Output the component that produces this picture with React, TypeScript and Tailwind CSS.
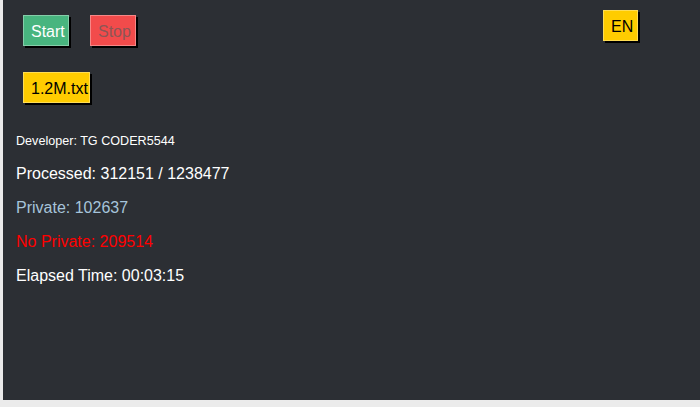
import React from 'react';

const btn =
  'h-[31px] px-[7px] pt-[2px] text-[16px] leading-none border border-[#ffffff55] shadow-[2px_2px_0_#000]';

const App: React.FC = () => {
  return (
    <div className="w-[700px] h-[407px] bg-[#ebebeb] font-['Liberation_Sans',Arial,sans-serif]">
      <div className="ml-[3px] h-[400px] bg-[#2c2f34] relative">
        <div className="pl-[20px] pt-[15px] flex gap-[21px]">
          <button className={`${btn} w-[46px] bg-[#48b57f] text-white`}>Start</button>
          <button className={`${btn} w-[46px] bg-[#f24b4b] text-[#8c5656]`}>Stop</button>
        </div>
        <button className={`${btn} absolute top-[10px] left-[600px] w-[35px] px-0 bg-[#ffcc00] text-black`}>
          EN
        </button>
        <div className="pl-[20px] pt-[26px]">
          <button className={`${btn} w-[67px] bg-[#ffcc00] text-black`}>1.2M.txt</button>
        </div>
        <div className="pl-[13px] pt-[31px] text-white">
          <div className="text-[12.6px] leading-[14px]">Developer: TG CODER5544</div>
          <div className="mt-[17px] text-[16px] leading-[18px]">Processed: 312151 / 1238477</div>
          <div className="mt-[16px] text-[16px] leading-[18px] text-[#a6c4da]">Private: 102637</div>
          <div className="mt-[16px] text-[16px] leading-[18px] text-[#ff0000]">No Private: 209514</div>
          <div className="mt-[16px] text-[16px] leading-[18px]">Elapsed Time: 00:03:15</div>
        </div>
      </div>
    </div>
  );
};

export default App;
